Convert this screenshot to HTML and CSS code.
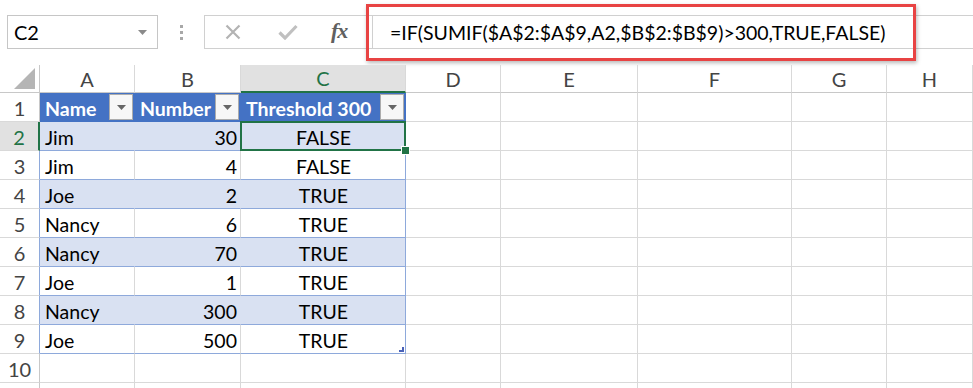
FILE: index.html
```html
<!DOCTYPE html>
<html>
<head>
<meta charset="utf-8">
<link rel="stylesheet" href="styles.css">
</head>
<body>
<div class="page">
  <div class="toolbar">
    <div class="namebox">
      <span class="name-text">C2</span>
      <svg class="caret" width="9" height="5" viewBox="0 0 9 5"><path d="M0 0H9L4.5 5Z" fill="#8a8a8a"/></svg>
    </div>
    <div class="grip"><i></i><i></i><i></i></div>
    <div class="buttons">
      <svg class="btn-x" width="16" height="16" viewBox="0 0 16 16"><path d="M1.5 1.5L14.5 14.5M14.5 1.5L1.5 14.5" stroke="#b3b3b3" stroke-width="2.2" fill="none"/></svg>
      <svg class="btn-check" width="20" height="16" viewBox="0 0 20 16"><path d="M1.5 8.5L7 14L18.5 2" stroke="#c0c0c0" stroke-width="3.2" fill="none"/></svg>
      <span class="fx">fx</span>
    </div>
    <div class="formula">
      <span class="formula-text">=IF(SUMIF($A$2:$A$9,A2,$B$2:$B$9)&gt;300,TRUE,FALSE)</span>
      <div class="highlight"></div>
    </div>
  </div>

  <div class="sheet">
    <!-- column headers -->
    <div class="cell corner"><svg width="21" height="21" viewBox="0 0 21 21"><path d="M21 0V21H0Z" fill="#b5b5b5"/></svg></div>
    <div class="cell ch">A</div>
    <div class="cell ch">B</div>
    <div class="cell ch ch-sel">C</div>
    <div class="cell ch">D</div>
    <div class="cell ch">E</div>
    <div class="cell ch">F</div>
    <div class="cell ch">G</div>
    <div class="cell ch">H</div>

    <!-- row 1 -->
    <div class="cell rh">1</div>
    <div class="cell th">Name<span class="dd"><svg width="9" height="5" viewBox="0 0 9 5"><path d="M0 0H9L4.5 5Z" fill="#666"/></svg></span></div>
    <div class="cell th">Number<span class="dd"><svg width="9" height="5" viewBox="0 0 9 5"><path d="M0 0H9L4.5 5Z" fill="#666"/></svg></span></div>
    <div class="cell th th-last">Threshold 300<span class="dd"><svg width="9" height="5" viewBox="0 0 9 5"><path d="M0 0H9L4.5 5Z" fill="#666"/></svg></span></div>
    <div class="cell"></div><div class="cell"></div><div class="cell"></div><div class="cell"></div><div class="cell"></div>

    <!-- row 2 -->
    <div class="cell rh rh-sel">2</div>
    <div class="cell band">Jim</div>
    <div class="cell band num">30</div>
    <div class="cell band ctr last active">FALSE<span class="sel-box"></span><span class="sel-handle"></span></div>
    <div class="cell"></div><div class="cell"></div><div class="cell"></div><div class="cell"></div><div class="cell"></div>

    <!-- row 3 -->
    <div class="cell rh rh-tbl">3</div>
    <div class="cell plain">Jim</div>
    <div class="cell plain num">4</div>
    <div class="cell plain ctr last">FALSE</div>
    <div class="cell"></div><div class="cell"></div><div class="cell"></div><div class="cell"></div><div class="cell"></div>

    <!-- row 4 -->
    <div class="cell rh rh-tbl">4</div>
    <div class="cell band">Joe</div>
    <div class="cell band num">2</div>
    <div class="cell band ctr last">TRUE</div>
    <div class="cell"></div><div class="cell"></div><div class="cell"></div><div class="cell"></div><div class="cell"></div>

    <!-- row 5 -->
    <div class="cell rh rh-tbl">5</div>
    <div class="cell plain">Nancy</div>
    <div class="cell plain num">6</div>
    <div class="cell plain ctr last">TRUE</div>
    <div class="cell"></div><div class="cell"></div><div class="cell"></div><div class="cell"></div><div class="cell"></div>

    <!-- row 6 -->
    <div class="cell rh rh-tbl">6</div>
    <div class="cell band">Nancy</div>
    <div class="cell band num">70</div>
    <div class="cell band ctr last">TRUE</div>
    <div class="cell"></div><div class="cell"></div><div class="cell"></div><div class="cell"></div><div class="cell"></div>

    <!-- row 7 -->
    <div class="cell rh rh-tbl">7</div>
    <div class="cell plain">Joe</div>
    <div class="cell plain num">1</div>
    <div class="cell plain ctr last">TRUE</div>
    <div class="cell"></div><div class="cell"></div><div class="cell"></div><div class="cell"></div><div class="cell"></div>

    <!-- row 8 -->
    <div class="cell rh rh-tbl">8</div>
    <div class="cell band">Nancy</div>
    <div class="cell band num">300</div>
    <div class="cell band ctr last">TRUE</div>
    <div class="cell"></div><div class="cell"></div><div class="cell"></div><div class="cell"></div><div class="cell"></div>

    <!-- row 9 -->
    <div class="cell rh rh-tbl">9</div>
    <div class="cell plain">Joe</div>
    <div class="cell plain num">500</div>
    <div class="cell plain ctr last resize">TRUE<span class="resize-mark"></span></div>
    <div class="cell"></div><div class="cell"></div><div class="cell"></div><div class="cell"></div><div class="cell"></div>

    <!-- row 10 -->
    <div class="cell rh">10</div>
    <div class="cell"></div><div class="cell"></div><div class="cell"></div>
    <div class="cell"></div><div class="cell"></div><div class="cell"></div><div class="cell"></div><div class="cell"></div>

    <!-- row 11 (only its top edge is in view) -->
    <div class="cell rh"></div>
    <div class="cell"></div><div class="cell"></div><div class="cell"></div>
    <div class="cell"></div><div class="cell"></div><div class="cell"></div><div class="cell"></div><div class="cell"></div>
  </div>
</div>
</body>
</html>
```

FILE: styles.css
```css
html, body {
  margin: 0;
  padding: 0;
  background: #ffffff;
  overflow: hidden;
}

.page {
  width: 973px;
  height: 388px;
  overflow: hidden;
  font-family: Lato, "Open Sans", sans-serif;
  color: #000;
}

/* ---------- formula bar ---------- */
.toolbar {
  height: 65px;
  display: flex;
  align-items: flex-start;
  padding-top: 15px;
  box-sizing: border-box;
}

.namebox {
  margin-left: 7px;
  width: 151px;
  height: 34px;
  box-sizing: border-box;
  border: 1px solid #c6c6c6;
  display: flex;
  align-items: center;
  justify-content: space-between;
  padding: 0 10px 0 6px;
}

.name-text {
  font-size: 20px;
  color: #000;
}

.caret {
  margin-top: 1px;
}

.grip {
  width: 46px;
  height: 34px;
  display: flex;
  flex-direction: column;
  align-items: center;
  justify-content: center;
  gap: 3px;
}

.grip i {
  display: block;
  width: 3px;
  height: 3px;
  background: #a8a8a8;
}

.buttons {
  width: 168px;
  height: 34px;
  box-sizing: border-box;
  border: 1px solid #d0d0d0;
  border-right: none;
  display: flex;
  align-items: center;
}

.btn-x {
  margin-left: 20px;
}

.btn-check {
  margin-left: 37px;
}

.fx {
  margin-left: 33px;
  font-family: "Liberation Serif", "DejaVu Serif", serif;
  font-style: italic;
  font-weight: 700;
  font-size: 22px;
  color: #606060;
  letter-spacing: -1px;
  margin-top: -3px;
}

.formula {
  position: relative;
  flex: 1;
  height: 34px;
  box-sizing: border-box;
  border: 1px solid #d0d0d0;
  border-right: none;
  display: flex;
  align-items: center;
  padding-left: 17px;
}

.formula-text {
  font-size: 19.5px;
  color: #000;
  white-space: nowrap;
}

/* annotation overlay around the formula */
.highlight {
  position: absolute;
  left: -7px;
  top: -12px;
  width: 550px;
  height: 57px;
  box-sizing: border-box;
  border: 3px solid #e84343;
  box-shadow: 1px 2px 4px rgba(0, 0, 0, 0.28);
  pointer-events: none;
}

/* ---------- sheet grid ---------- */
.sheet {
  display: grid;
  grid-template-columns: 40px 95px 106px 165px 95px 137px 154px 95px 86px;
  grid-template-rows: 28px repeat(11, 29px);
  font-size: 19.5px;
}

.cell {
  box-sizing: border-box;
  border-right: 1px solid #d9d9d9;
  border-bottom: 1px solid #d9d9d9;
  display: flex;
  align-items: center;
  padding: 2px 4px 0 5px;
  white-space: nowrap;
  position: relative;
}

.corner {
  align-items: flex-end;
  justify-content: flex-end;
  padding: 0 4px 3px 0;
  border-bottom-color: #c8c8c8;
  border-right-color: #c8c8c8;
}

.ch {
  justify-content: center;
  padding: 0;
  color: #444;
  font-size: 20px;
  border-bottom-color: #c8c8c8;
}

.ch-sel {
  background: #e1e1e1;
  color: #217346;
  border-bottom: 2px solid #217346;
}

.rh {
  justify-content: center;
  padding: 1px 0 0 0;
  color: #444;
  font-size: 20px;
  border-right-color: #c8c8c8;
}

.rh-tbl {
  border-right-color: #8ea9db;
}

.rh-sel {
  background: #e1e1e1;
  color: #217346;
  border-right: 2px solid #217346;
}

/* ---------- table ---------- */
.th {
  background: #4472c4;
  border-right-color: #4472c4;
  border-bottom-color: #4472c4;
  color: #ffffff;
  font-weight: 700;
  padding-right: 1px;
  justify-content: space-between;
}

.th-last {
  border-right-color: #4472c4;
}

.dd {
  width: 24px;
  height: 26px;
  box-sizing: border-box;
  background: #f7f7f7;
  border: 1px solid #acacac;
  display: flex;
  align-items: center;
  justify-content: center;
  flex-shrink: 0;
  margin-top: -2px;
}

.band {
  background: #d9e1f2;
  border-right-color: #d9e1f2;
  border-bottom-color: #8ea9db;
}

.plain {
  background: #ffffff;
  border-bottom-color: #8ea9db;
}

.last {
  border-right-color: #8ea9db;
}

.num {
  justify-content: flex-end;
  padding-right: 3px;
}

.ctr {
  justify-content: center;
}

.active {
  z-index: 2;
}

.sel-box {
  position: absolute;
  left: -1px;
  top: -1px;
  right: -1px;
  bottom: -1px;
  border: 2px solid #217346;
  pointer-events: none;
}

.sel-handle {
  position: absolute;
  right: -4px;
  bottom: -4px;
  width: 7px;
  height: 7px;
  background: #217346;
  box-shadow: 0 0 0 1px #ffffff;
}

.resize-mark {
  position: absolute;
  right: 1px;
  bottom: 1px;
  width: 5px;
  height: 5px;
  background: #4a62b8;
  clip-path: polygon(100% 0, 100% 100%, 0 100%, 0 60%, 60% 60%, 60% 0);
}
```
